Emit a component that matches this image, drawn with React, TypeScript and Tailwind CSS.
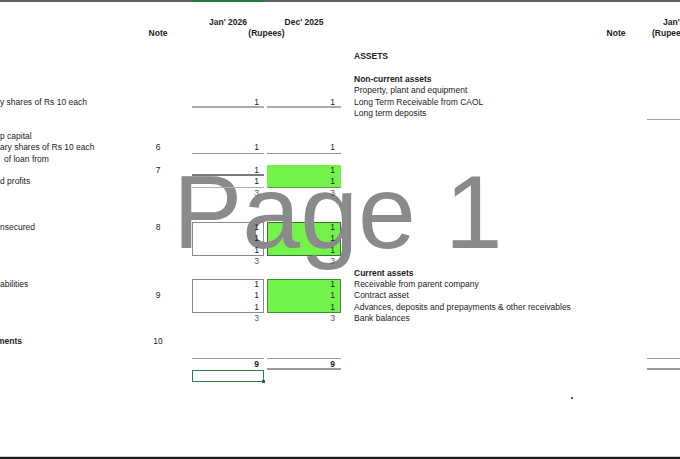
const font = "font-['Liberation_Sans',Arial,sans-serif]";

const leftLabels = [
  { row: 'row-start-8', text: 'y shares of Rs 10 each', cls: '' },
  { row: 'row-start-11', text: 'p capital', cls: '' },
  { row: 'row-start-12', text: 'ary shares of Rs 10 each', cls: '' },
  { row: 'row-start-13', text: 'of loan from', cls: 'pl-[4px]' },
  { row: 'row-start-15', text: 'd profits', cls: '' },
  { row: 'row-start-19', text: 'nsecured', cls: '' },
  { row: 'row-start-24', text: 'abilities', cls: '' },
  { row: 'row-start-29', text: 'ments', cls: 'font-bold -ml-[3px]' },
];

const notes = [
  { row: 'row-start-12', text: '6' },
  { row: 'row-start-14', text: '7' },
  { row: 'row-start-19', text: '8' },
  { row: 'row-start-25', text: '9' },
  { row: 'row-start-29', text: '10' },
];

const rightLabels = [
  { row: 'row-start-4', text: 'ASSETS', bold: true },
  { row: 'row-start-6', text: 'Non-current assets', bold: true },
  { row: 'row-start-7', text: 'Property, plant and equipment', bold: false },
  { row: 'row-start-8', text: 'Long Term Receivable from CAOL', bold: false },
  { row: 'row-start-9', text: 'Long term deposits', bold: false },
  { row: 'row-start-23', text: 'Current assets', bold: true },
  { row: 'row-start-24', text: 'Receivable from parent company', bold: false },
  { row: 'row-start-25', text: 'Contract asset', bold: false },
  { row: 'row-start-26', text: 'Advances, deposits and prepayments & other receivables', bold: false },
  { row: 'row-start-27', text: 'Bank balances', bold: false },
];

// value cells: Jan column (col 4) and Dec column (col 6)
const values = [
  { row: 'row-start-8', jan: '1', dec: '1', janCls: 'border-b-2 border-[#a9a9a9]', decCls: 'border-b-2 border-[#a9a9a9]' },
  { row: 'row-start-12', jan: '1', dec: '1', janCls: 'border-b-[1.5px] border-[#8f8f8f]', decCls: 'border-b-[1.5px] border-[#8f8f8f]' },
  { row: 'row-start-14', jan: '1', dec: '1', janCls: 'border-b-2 border-[#7a7a7a]', decCls: '' },
  { row: 'row-start-15', jan: '1', dec: '1', janCls: 'border-b border-[#b0b0b0]', decCls: '' },
  { row: 'row-start-16', jan: '3', dec: '3', janCls: 'text-[#555]', decCls: 'text-[#555]' },
  { row: 'row-start-19', jan: '1', dec: '1', janCls: '', decCls: '' },
  { row: 'row-start-20', jan: '1', dec: '1', janCls: '', decCls: '' },
  { row: 'row-start-21', jan: '1', dec: '1', janCls: '', decCls: '' },
  { row: 'row-start-22', jan: '3', dec: '3', janCls: 'text-[#555]', decCls: 'text-[#555]' },
  { row: 'row-start-24', jan: '1', dec: '1', janCls: '', decCls: '' },
  { row: 'row-start-25', jan: '1', dec: '1', janCls: '', decCls: '' },
  { row: 'row-start-26', jan: '1', dec: '1', janCls: '', decCls: '' },
  { row: 'row-start-27', jan: '3', dec: '3', janCls: 'text-[#555]', decCls: 'text-[#555]' },
  { row: 'row-start-30', jan: '', dec: '', janCls: 'border-b border-[#a0a0a0]', decCls: 'border-b border-[#a0a0a0]' },
  { row: 'row-start-31', jan: '9', dec: '9', janCls: 'font-bold', decCls: 'font-bold border-b-2 border-[#9a9a9a]' },
];

export default function App() {
  return (
    <div className={`relative w-[680px] h-[459px] overflow-hidden bg-white text-[8.5px] text-[#222] ${font}`}>
      {/* top edge of the sheet, selected column in green */}
      <div className="flex h-[2px]">
        <div className="w-[192px] bg-[#606060]" />
        <div className="w-[72px] bg-[#1e7b45]" />
        <div className="flex-1 bg-[#606060]" />
      </div>

      <div className="pt-[15px]">
        <div className="grid grid-cols-[148px_20px_24px_72px_3px_74px_13px_246px_32px_16px_72px] auto-rows-[11.4px] leading-[11.4px] whitespace-nowrap">
          {/* headers */}
          <div className="col-start-4 row-start-1 text-center font-bold">Jan' 2026</div>
          <div className="col-start-6 row-start-1 text-center font-bold">Dec' 2025</div>
          <div className="col-start-2 row-start-2 text-center font-bold">Note</div>
          <div className="col-start-4 col-span-3 row-start-2 text-center font-bold">(Rupees)</div>
          <div className="col-start-9 row-start-2 text-center font-bold">Note</div>
          <div className="col-start-11 row-start-1 pl-[15px] font-bold">Jan' 2026</div>
          <div className="col-start-11 row-start-2 pl-[4px] font-bold">(Rupees)</div>

          {/* fills and boxes */}
          <div className="col-start-6 row-start-14 row-span-2 bg-[#74f24c] border-b border-[#5e9e4a]" />
          <div className="col-start-4 row-start-19 row-span-3 border border-[#8a8a8a]" />
          <div className="col-start-6 row-start-19 row-span-3 bg-[#74f24c] border border-[#3f6f35]" />
          <div className="col-start-4 row-start-24 row-span-3 border border-[#8a8a8a]" />
          <div className="col-start-6 row-start-24 row-span-3 bg-[#74f24c] border border-[#4a8a3c]" />
          <div className="relative col-start-4 row-start-32 border border-[#2f7d4a]">
            <span className="absolute -right-[2px] -bottom-[2px] w-[3px] h-[3px] bg-[#1e6b3c]" />
          </div>

          {leftLabels.map((l) => (
            <div key={l.text} className={`col-start-1 ${l.row} ${l.cls}`}>
              {l.text}
            </div>
          ))}

          {notes.map((n) => (
            <div key={n.text} className={`col-start-2 ${n.row} text-center`}>
              {n.text}
            </div>
          ))}

          {rightLabels.map((r) => (
            <div key={r.text} className={`col-start-8 ${r.row} ${r.bold ? 'font-bold' : ''}`}>
              {r.text}
            </div>
          ))}

          {values.map((v) => (
            <div key={v.row} className="contents">
              <div className={`relative z-20 col-start-4 ${v.row} text-right pr-[5px] ${v.janCls}`}>{v.jan}</div>
              <div className={`relative z-20 col-start-6 ${v.row} text-right pr-[6px] ${v.decCls}`}>{v.dec}</div>
            </div>
          ))}

          {/* right-hand figure lines */}
          <div className="col-start-11 row-start-9 -ml-[1px] border-b border-[#a0a0a0]" />
          <div className="col-start-11 row-start-30 -ml-[1px] border-b border-[#a0a0a0]" />
          <div className="col-start-11 row-start-31 -ml-[1px] border-b-2 border-[#9a9a9a]" />
        </div>
      </div>

      {/* page break watermark */}
      <div className="pointer-events-none absolute left-[173px] top-[160px] z-10 text-[104px] leading-none text-[#8a8a8a] whitespace-nowrap">
        Page 1
      </div>

      {/* stray mark */}
      <div className="absolute left-[571px] top-[397px] w-[2px] h-[2px] bg-[#555]" />

      {/* bottom edge */}
      <div className="absolute left-0 right-0 bottom-0 h-[3px] border-t border-[#d4d4d4] bg-[#1c1c1c]" />
    </div>
  );
}
